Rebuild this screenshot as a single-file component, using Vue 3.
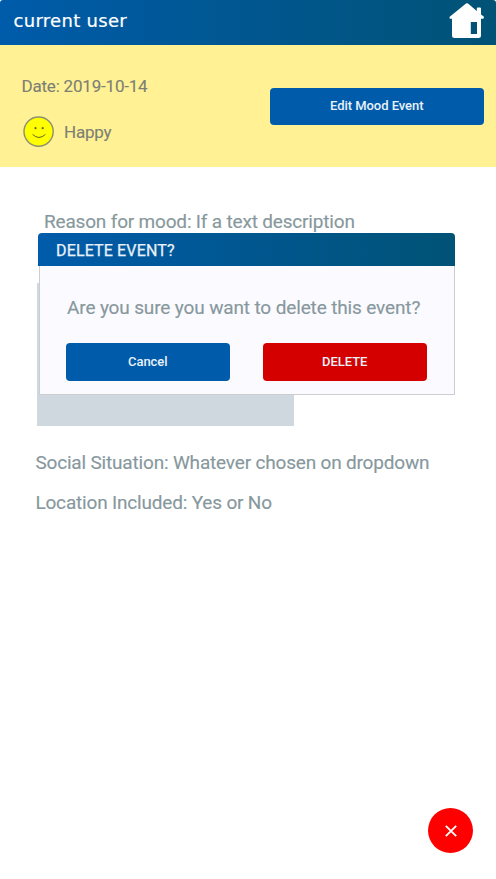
<script setup>
const mood = { date: '2019-10-14', label: 'Happy' }
const details = [
  { label: 'Social Situation', value: 'Whatever chosen on dropdown' },
  { label: 'Location Included', value: 'Yes or No' },
]
</script>

<template>
  <main class="screen">
    <header class="topbar">
      <h1 class="user">current user</h1>
      <svg class="home" viewBox="0 0 36 36" aria-label="Home">
        <path d="M17 0.5Q18 -0.2 19 0.5L27.8 8V5.5Q27.8 4.5 28.8 4.5H31Q32 4.5 32 5.5V11.6L34.7 13.4Q35.4 15.4 34 15.7H32V33Q32 35 29.5 35H5.5Q3 35 3 33V15.7H1.6Q-0.4 15.3 1 13.4Z" fill="#fff" />
        <rect x="21.8" y="19" width="6.2" height="12" fill="#005377" />
      </svg>
    </header>

    <section class="mood">
      <div class="summary">
        <p class="date">Date: {{ mood.date }}</p>
        <div class="feeling">
          <svg class="face" viewBox="0 0 32 32">
            <circle cx="15.6" cy="16.6" r="14.6" fill="#ff0" stroke="#8d9070" stroke-width="1.4" />
            <circle cx="12.5" cy="13.2" r="1.1" fill="#66662a" />
            <circle cx="19.7" cy="13.2" r="1.1" fill="#66662a" />
            <path d="M9.9 19.7Q15.9 25.5 22.1 19.7" fill="none" stroke="#66662a" stroke-width="1" stroke-linecap="round" />
          </svg>
          <span class="name">{{ mood.label }}</span>
        </div>
      </div>
      <button class="btn edit">Edit Mood Event</button>
    </section>

    <section class="details">
      <p class="line reason">Reason for mood: If a text description</p>
      <div class="photo"></div>
      <p v-for="(item, i) in details" :key="item.label" class="line" :class="'item' + i">{{ item.label }}: {{ item.value }}</p>
    </section>

    <div class="dialog" role="dialog">
      <h2 class="dialog-title">DELETE EVENT?</h2>
      <div class="dialog-body">
        <p class="question">Are you sure you want to delete this event?</p>
        <div class="actions">
          <button class="btn">Cancel</button>
          <button class="btn danger">DELETE</button>
        </div>
      </div>
    </div>

    <button class="fab" aria-label="Delete">
      <svg viewBox="0 0 12 12"><path d="M0.8 0.8L11.2 11.2M11.2 0.8L0.8 11.2" stroke="#fff" stroke-width="1.8" /></svg>
    </button>
  </main>
</template>

<style>
body { background: #fff; }
</style>

<style scoped>
* { box-sizing: border-box; }
.screen {
  position: relative;
  width: 496px;
  height: 879px;
  overflow: hidden;
  background: #fff;
  font-family: Roboto, sans-serif;
}
h1, h2, p { margin: 0; font-weight: 400; white-space: nowrap; }
.topbar {
  display: flex;
  justify-content: space-between;
  align-items: flex-start;
  height: 45px;
  padding: 3px 11px 0 13.5px;
  border-radius: 3px 3px 0 0;
  background: linear-gradient(90deg, #005baa, #005377 97%);
}
.user {
  font-family: "DejaVu Sans", sans-serif;
  font-size: 18px;
  letter-spacing: 0.3px;
  line-height: 35px;
  color: #fff;
  -webkit-text-stroke: 0.2px #fff;
}
.home { width: 36px; height: 36px; }
.mood {
  display: flex;
  justify-content: space-between;
  height: 122px;
  padding: 29px 12.5px 0 21.5px;
  background: #fff194;
  color: #7b7f74;
}
.date, .name { font-size: 17px; line-height: 24px; letter-spacing: -0.2px; -webkit-text-stroke: 0.1px #7b7f74; }
.feeling { display: flex; align-items: center; gap: 9px; margin-top: 17px; padding-left: 1.5px; }
.face { width: 32px; height: 32px; }
.name { padding-top: 2px; }
.btn {
  width: 164.5px;
  height: 38px;
  padding: 0;
  border: 0;
  border-radius: 4px;
  background: #005baa;
  color: #e9f2fa;
  font: 500 13px/36px Roboto, sans-serif;
  letter-spacing: -0.05px;
}
.edit { width: 213.5px; height: 37.5px; margin-top: 13.5px; }
.danger { background: #d40000; }
.details { padding: 42px 0 0 36px; color: #87989d; }
.line {
  font-size: 19px;
  line-height: 26px;
  letter-spacing: -0.18px;
  -webkit-text-stroke: 0.15px #87989d;
}
.reason { padding-left: 8px; }
.photo { width: 257px; height: 143px; margin: 48px 0 0 1px; background: #ced8de; }
.item0, .item1 { margin-left: -0.6px; }
.item0 { margin-top: 24px; }
.item1 { margin-top: 14px; }
.dialog {
  position: absolute;
  left: 38px;
  top: 233px;
  width: 417px;
}
.dialog-title {
  height: 33px;
  padding-left: 18px;
  border-radius: 4px 4px 0 0;
  background: linear-gradient(90deg, #005baa, #005377 97%);
  color: #e9f2fa;
  font-size: 16px;
  letter-spacing: 0.15px;
  line-height: 35px;
  -webkit-text-stroke: 0.25px #e9f2fa;
}
.dialog-body {
  height: 129px;
  margin-left: 1px;
  padding: 28px 27px 0 26px;
  border: 1px solid #cbcdd3;
  border-top: 0;
  background: #fbfaff;
}
.question {
  padding-left: 1px;
  font-size: 19px;
  line-height: 28px;
  letter-spacing: -0.14px;
  color: #87989d;
  -webkit-text-stroke: 0.15px #87989d;
}
.actions { display: flex; justify-content: space-between; margin: 21px 0 0 -0.5px; }
.fab {
  position: absolute;
  left: 428px;
  top: 808px;
  display: flex;
  align-items: center;
  justify-content: center;
  width: 45px;
  height: 45px;
  padding: 0;
  border: 0;
  border-radius: 50%;
  background: #f00;
}
.fab svg { width: 12px; height: 12px; }
</style>
